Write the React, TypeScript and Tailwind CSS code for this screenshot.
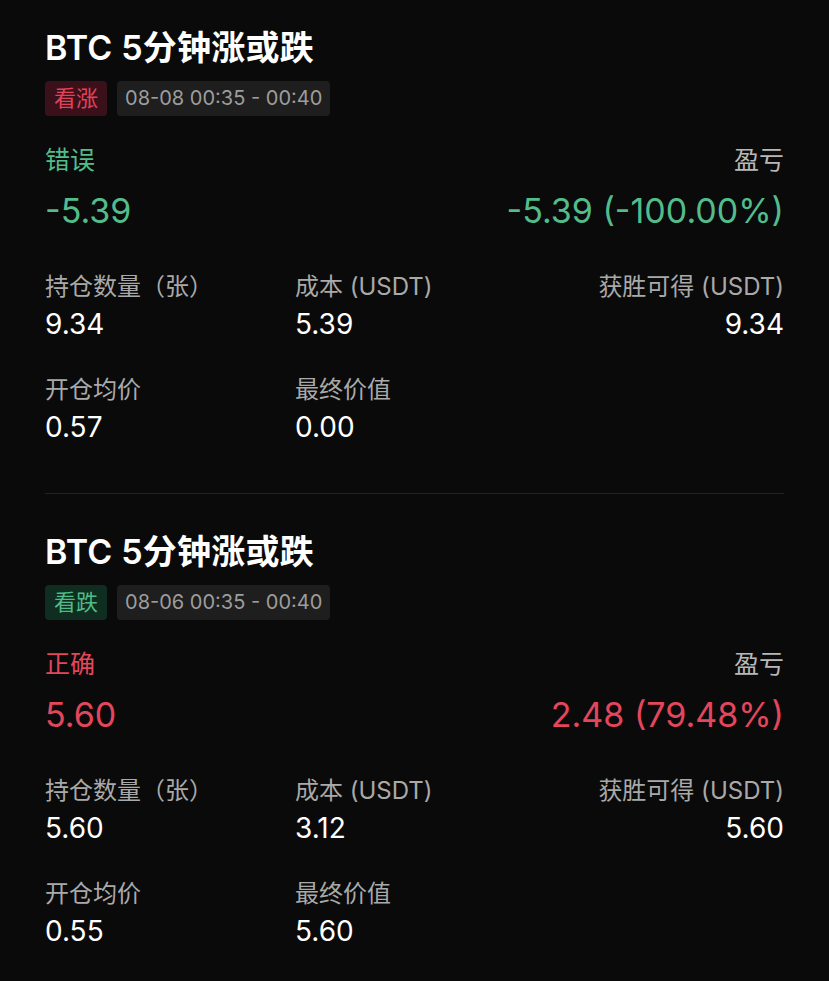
import React from "react";

const FONT = { fontFamily: 'Inter, "Noto Sans CJK SC", "Noto Sans", sans-serif' };

type Card = {
  side: string;
  up: boolean;
  time: string;
  result: string;
  win: boolean;
  amount: string;
  pnl: string;
  qty: string;
  cost: string;
  payout: string;
  avg: string;
  final: string;
};

const cards: Card[] = [
  {
    side: "看涨",
    up: true,
    time: "08-08 00:35 - 00:40",
    result: "错误",
    win: false,
    amount: "-5.39",
    pnl: "-5.39 (-100.00%)",
    qty: "9.34",
    cost: "5.39",
    payout: "9.34",
    avg: "0.57",
    final: "0.00",
  },
  {
    side: "看跌",
    up: false,
    time: "08-06 00:35 - 00:40",
    result: "正确",
    win: true,
    amount: "5.60",
    pnl: "2.48 (79.48%)",
    qty: "5.60",
    cost: "3.12",
    payout: "5.60",
    avg: "0.55",
    final: "5.60",
  },
];

function OrderCard({ c }: { c: Card }) {
  const resultColor = c.win ? "text-[#e4465c]" : "text-[#52bd8b]";
  return (
    <div className="flex flex-col">
      <div className="h-[40px] text-[34px] leading-[40px] font-semibold text-white tracking-[0.2px]">
        BTC 5分钟涨或跌
      </div>
      <div className="mt-[13px] flex items-center gap-[10px]">
        <span
          className={
            c.up
              ? "h-[35px] px-[9px] rounded-[4px] bg-[#3a101a] text-[#e3435a] text-[22px] leading-[35px]"
              : "h-[35px] px-[9px] rounded-[4px] bg-[#0f2e21] text-[#4fbb87] text-[22px] leading-[35px]"
          }
        >
          {c.side}
        </span>
        <span className="h-[35px] px-[8px] rounded-[4px] bg-[#1e1e1e] text-[#9d9d9d] text-[20px] leading-[35px]">
          {c.time}
        </span>
      </div>
      <div className="mt-[28px] flex justify-between text-[25px] leading-[32px]">
        <span className={resultColor}>{c.result}</span>
        <span className="text-[#b8b8b8]">盈亏</span>
      </div>
      <div className={`mt-[17px] flex justify-between text-[34px] leading-[36px] ${resultColor}`}>
        <span>{c.amount}</span>
        <span>{c.pnl}</span>
      </div>
      <div className="mt-[42px] grid grid-cols-[250px_1fr_auto] gap-y-[34px]">
        <Field label="持仓数量（张）" value={c.qty} />
        <Field label="成本 (USDT)" value={c.cost} />
        <Field label="获胜可得 (USDT)" value={c.payout} right />
        <Field label="开仓均价" value={c.avg} />
        <Field label="最终价值" value={c.final} />
        <div />
      </div>
    </div>
  );
}

function Field({ label, value, right }: { label: string; value: string; right?: boolean }) {
  return (
    <div className={right ? "flex flex-col items-end" : "flex flex-col"}>
      <span className="text-[24px] leading-[32px] text-[#a9a9a9]">{label}</span>
      <span className="mt-[5px] text-[28px] leading-[32px] text-white">{value}</span>
    </div>
  );
}

export default function App() {
  return (
    <div className="min-h-[981px] w-full bg-[#0a0a0a] px-[45px] pt-[28px]" style={FONT}>
      <OrderCard c={cards[0]} />
      <div className="mt-[50px] h-px bg-[#222222]" />
      <div className="mt-[38px]">
        <OrderCard c={cards[1]} />
      </div>
    </div>
  );
}
